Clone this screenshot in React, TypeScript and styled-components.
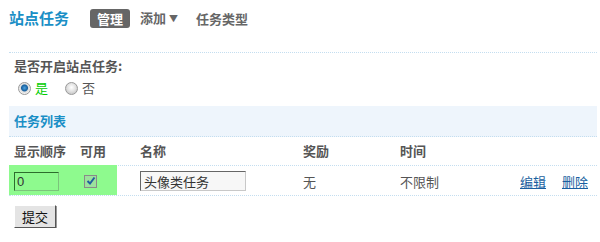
import styled, { createGlobalStyle } from "styled-components";

const GlobalStyle = createGlobalStyle`
  body {
    margin: 0;
    background: #fff;
    font-family: "Noto Sans CJK SC", "Liberation Sans", sans-serif;
    color: #555;
  }
`;

const columns = [
  { title: "显示顺序", width: 66 },
  { title: "可用", width: 42 },
  { title: "名称", width: 181, pad: 23 },
  { title: "奖励", width: 97 },
  { title: "时间", width: 120 },
  { title: "", width: 42 },
  { title: "", width: 40 },
];

const gridTemplate = columns.map((c) => `${c.width}px`).join(" ");

export default function App() {
  return (
    <>
      <GlobalStyle />
      <StyledPage>
        <StyledNav>
          <StyledTitle>站点任务</StyledTitle>
          <StyledNavItem $active>管理</StyledNavItem>
          <StyledNavItem>
            添加<StyledCaret>▼</StyledCaret>
          </StyledNavItem>
          <StyledNavItem>任务类型</StyledNavItem>
        </StyledNav>

        <StyledSection>
          <StyledLabel>是否开启站点任务:</StyledLabel>
          <StyledRadioRow>
            <StyledRadioOption>
              <StyledRadio $checked />
              <StyledRadioText $checked>是</StyledRadioText>
            </StyledRadioOption>
            <StyledRadioOption>
              <StyledRadio />
              <StyledRadioText>否</StyledRadioText>
            </StyledRadioOption>
          </StyledRadioRow>
        </StyledSection>

        <StyledBand>任务列表</StyledBand>

        <StyledHeaderRow>
          {columns.map((c, i) => (
            <StyledHeadCell key={i} $pad={c.pad}>
              {c.title}
            </StyledHeadCell>
          ))}
        </StyledHeaderRow>

        <StyledDataRow>
          <StyledCell $green>
            <StyledOrderInput defaultValue="0" />
          </StyledCell>
          <StyledCell $green $pad={9}>
            <StyledCheck>
              <svg width="10" height="10" viewBox="0 0 10 10">
                <path d="M1.5 5 L4 7.5 L8.5 1.5" fill="none" stroke="#1f5f9e" strokeWidth="2" />
              </svg>
            </StyledCheck>
          </StyledCell>
          <StyledCell $pad={23}>
            <StyledNameInput defaultValue="头像类任务" />
          </StyledCell>
          <StyledCell>无</StyledCell>
          <StyledCell>不限制</StyledCell>
          <StyledCell>
            <StyledLink href="#">编辑</StyledLink>
          </StyledCell>
          <StyledCell>
            <StyledLink href="#">删除</StyledLink>
          </StyledCell>
        </StyledDataRow>

        <StyledSubmit>提交</StyledSubmit>
      </StyledPage>
    </>
  );
}

const StyledPage = styled.div`
  width: 588px;
  padding-left: 9px;
`;

const StyledNav = styled.div`
  display: flex;
  align-items: center;
  height: 36px;
  padding-bottom: 16px;
  border-bottom: 1px dotted #c4def0;
`;

const StyledTitle = styled.div`
  font-size: 15px;
  font-weight: bold;
  color: #1a8fc6;
  margin-right: 21px;
  line-height: 20px;
`;

const StyledNavItem = styled.div<{ $active?: boolean }>`
  font-size: 13px;
  font-weight: bold;
  line-height: 19px;
  padding: 0 7px;
  margin-right: ${(p) => (p.$active ? "3px" : "4px")};
  border-radius: 3px;
  color: ${(p) => (p.$active ? "#fff" : "#666")};
  background: ${(p) => (p.$active ? "#666" : "transparent")};
`;

const StyledCaret = styled.span`
  font-size: 9px;
  margin-left: 3px;
  vertical-align: 1px;
`;

const StyledSection = styled.div`
  padding: 4px 0 0 5px;
  height: 49px;
`;

const StyledLabel = styled.div`
  font-size: 13px;
  font-weight: bold;
  color: #555;
  line-height: 18px;
`;

const StyledRadioRow = styled.div`
  display: flex;
  align-items: center;
  gap: 17px;
  margin-top: 4px;
  padding-left: 4px;
`;

const StyledRadioOption = styled.div`
  display: flex;
  align-items: center;
  gap: 4px;
`;

const StyledRadio = styled.span<{ $checked?: boolean }>`
  width: 11px;
  height: 11px;
  border-radius: 50%;
  border: 1px solid #999;
  background: ${(p) =>
    p.$checked
      ? "radial-gradient(circle at 50% 45%, #4fa3e0 0, #17609e 3px, #dcdcdc 4px, #f4f4f4 6px)"
      : "radial-gradient(circle at 50% 40%, #fff 0, #e2e2e2 4px, #cfcfcf 6px)"};
`;

const StyledRadioText = styled.span<{ $checked?: boolean }>`
  font-size: 13px;
  line-height: 18px;
  color: ${(p) => (p.$checked ? "#0c0" : "#555")};
`;

const StyledBand = styled.div`
  height: 30px;
  line-height: 30px;
  background: #eef5fc;
  border-bottom: 1px dotted #c4def0;
  padding-left: 5px;
  font-size: 13px;
  font-weight: bold;
  color: #1a8fc6;
`;

const StyledHeaderRow = styled.div`
  display: grid;
  grid-template-columns: ${gridTemplate};
  height: 28px;
  align-items: end;
  border-bottom: 1px dotted #c4def0;
`;

const StyledHeadCell = styled.div<{ $pad?: number }>`
  padding-left: ${(p) => p.$pad ?? 5}px;
  padding-bottom: 5px;
  font-size: 13px;
  font-weight: bold;
  color: #555;
  line-height: 18px;
`;

const StyledDataRow = styled.div`
  display: grid;
  grid-template-columns: ${gridTemplate};
  height: 29px;
  border-bottom: 1px dotted #c4def0;
`;

const StyledCell = styled.div<{ $green?: boolean; $pad?: number }>`
  display: flex;
  align-items: center;
  padding-left: ${(p) => p.$pad ?? 5}px;
  padding-top: 2px;
  font-size: 13px;
  color: #555;
  background: ${(p) => (p.$green ? "#8efa8e" : "transparent")};
  margin-top: -1px;
  height: 28px;
`;

const StyledOrderInput = styled.input`
  box-sizing: border-box;
  width: 45px;
  height: 19px;
  padding: 0 2px;
  font-size: 13px;
  font-family: "Liberation Sans", sans-serif;
  color: #333;
  background: #8efa8e;
  border: 1px solid #7bc47b;
  border-top-color: #2d6d2d;
  border-left-color: #2d6d2d;
  outline: none;
`;

const StyledCheck = styled.span`
  display: flex;
  align-items: center;
  justify-content: center;
  box-sizing: border-box;
  width: 13px;
  height: 13px;
  border: 1px solid #8a8a8a;
  background: #9ce29c;
`;

const StyledNameInput = styled.input`
  box-sizing: border-box;
  width: 106px;
  height: 20px;
  padding: 0 3px;
  font-size: 13px;
  font-family: "Noto Sans CJK SC", sans-serif;
  color: #333;
  background: #f7f7f7;
  border: 1px solid #c8c8c8;
  border-top-color: #666;
  border-left-color: #666;
  outline: none;
`;

const StyledLink = styled.a`
  color: #1a5fa0;
  text-decoration: underline;
  font-size: 13px;
`;

const StyledSubmit = styled.button`
  margin: 9px 0 0 5px;
  width: 42px;
  height: 23px;
  padding: 0;
  font-size: 13px;
  font-family: "Noto Sans CJK SC", sans-serif;
  color: #111;
  background: #e4e4e4;
  border: 1px solid #fff;
  border-right-color: #555;
  border-bottom-color: #555;
  box-shadow: 1px 1px 0 #999;
`;
